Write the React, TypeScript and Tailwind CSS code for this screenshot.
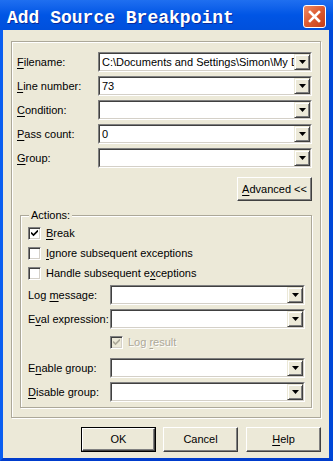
import React from 'react';

const U = ({ children }: { children: React.ReactNode }) => <span className="underline underline-offset-[2px]">{children}</span>;

const Arrow = () => (
    <svg width="7" height="4" viewBox="0 0 7 4" className="block">
        <path d="M0 0h7L3.5 4z" fill="#000" />
    </svg>
);

const Combo = ({ value = '' }: { value?: string }) => (
    <div className="flex h-[20px] flex-1 min-w-0 border border-t-[#808080] border-l-[#808080] border-b-white border-r-white">
        <div className="flex flex-1 min-w-0 border border-t-[#404040] border-l-[#404040] border-b-[#d4d0c8] border-r-[#d4d0c8] bg-white">
            <div className="flex-1 min-w-0 overflow-hidden whitespace-nowrap pl-[2px] leading-[16px]">{value}</div>
            <div className="flex w-[16px] items-center justify-center border border-t-[#ece9d8] border-l-[#ece9d8] border-b-[#404040] border-r-[#404040] bg-[#ece9d8] shadow-[inset_1px_1px_0_white,inset_-1px_-1px_0_#808080]">
                <Arrow />
            </div>
        </div>
    </div>
);

const Check = ({ checked = false, disabled = false }: { checked?: boolean; disabled?: boolean }) => (
    <div className={`flex h-[13px] w-[13px] shrink-0 items-center justify-center border border-t-[#808080] border-l-[#808080] border-b-white border-r-white shadow-[inset_1px_1px_0_#404040,inset_-1px_-1px_0_#d4d0c8] ${disabled ? 'bg-[#ece9d8]' : 'bg-white'}`}>
        {checked && (
            <svg width="7" height="7" viewBox="0 0 7 7" className="block">
                <path d="M0 2.5l2.5 2.5L7 0.5" fill="none" stroke={disabled ? '#aca899' : '#000'} strokeWidth="1.6" />
            </svg>
        )}
    </div>
);

const Button = ({ children, isDefault = false, className = '' }: { children: React.ReactNode; isDefault?: boolean; className?: string }) => (
    <div className={`${isDefault ? 'border border-black' : ''} ${className}`}>
        <div className="flex h-full w-full items-center justify-center border border-t-white border-l-white border-b-[#404040] border-r-[#404040] bg-[#ece9d8] shadow-[inset_-1px_-1px_0_#808080]">
            {children}
        </div>
    </div>
);

const topFields: { label: React.ReactNode; value?: string }[] = [
    { label: <><U>F</U>ilename:</>, value: 'C:\\Documents and Settings\\Simon\\My D' },
    { label: <><U>L</U>ine number:</>, value: '73' },
    { label: <><U>C</U>ondition:</> },
    { label: <><U>P</U>ass count:</>, value: '0' },
    { label: <><U>G</U>roup:</> },
];

export default function App() {
    return (
        <div className="flex h-[461px] w-[333px] flex-col bg-[#0055e5] text-[11px] text-black [font-family:'Liberation_Sans',Arial,sans-serif]">
            {/* title bar */}
            <div className="flex h-[30px] shrink-0 items-start justify-between bg-gradient-to-b from-[#1f6ff0] via-[#0055e5] to-[#0050dc]">
                <div className="pl-[7px] pt-[9px] text-[18px] font-bold leading-[18px] text-white [font-family:'Liberation_Mono',monospace] [text-shadow:1px_1px_0_#0b2a9a]">
                    Add Source Breakpoint
                </div>
                <div className="mr-[7px] mt-[5px] flex h-[23px] w-[23px] items-center justify-center rounded-[3px] border border-white bg-gradient-to-br from-[#ee8a64] via-[#dc5a30] to-[#c43c16]">
                    <svg width="13" height="13" viewBox="0 0 13 13">
                        <path d="M2 2l9 9M11 2l-9 9" stroke="#fff" strokeWidth="2.6" strokeLinecap="square" />
                    </svg>
                </div>
            </div>

            {/* client area */}
            <div className="flex flex-1 flex-col border-b-[3px] border-l-[3px] border-r-4 border-l-[#0a5ef0] border-r-[#0047d8] border-b-[#003ccc] bg-[#ece9d8] whitespace-nowrap">
                <div className="mx-[8px] mt-[11px] flex h-[377px] flex-col border border-[#aca899] pl-[5px] pr-[8px] pt-[10px] shadow-[inset_1px_1px_0_white,1px_1px_0_white]">
                    <div className="flex flex-col gap-[4px]">
                        {topFields.map((f, i) => (
                            <div key={i} className="flex items-center">
                                <div className="w-[81px] shrink-0">{f.label}</div>
                                <Combo value={f.value} />
                            </div>
                        ))}
                    </div>

                    <div className="mt-[9px] flex justify-end">
                        <Button className="h-[24px] w-[75px]">
                            <span><U>A</U>dvanced &lt;&lt;</span>
                        </Button>
                    </div>

                    <div className="relative ml-[3px] mt-[14px] flex flex-col border border-[#aca899] pb-[5px] pl-[7px] pr-[6px] pt-[7px] shadow-[inset_1px_1px_0_white,1px_1px_0_white]">
                        <span className="absolute left-[8px] top-[-8px] bg-[#ece9d8] px-[2px] leading-[14px]">Actions:</span>

                        <div className="flex h-[20px] items-center gap-[5px]">
                            <Check checked />
                            <span><U>B</U>reak</span>
                        </div>
                        <div className="flex h-[20px] items-center gap-[5px]">
                            <Check />
                            <span><U>I</U>gnore subsequent exceptions</span>
                        </div>
                        <div className="flex h-[20px] items-center gap-[5px]">
                            <Check />
                            <span>Handle subsequent e<U>x</U>ceptions</span>
                        </div>

                        <div className="mt-[2px] flex items-center">
                            <div className="w-[82px] shrink-0">Log <U>m</U>essage:</div>
                            <Combo />
                        </div>
                        <div className="mt-[4px] flex items-center">
                            <div className="w-[82px] shrink-0">E<U>v</U>al expression:</div>
                            <Combo />
                        </div>
                        <div className="mt-[3px] flex h-[20px] items-center gap-[5px] pl-[82px]">
                            <Check checked disabled />
                            <span className="text-[#aca899] [text-shadow:1px_1px_0_white]">Log <U>r</U>esult</span>
                        </div>
                        <div className="mt-[6px] flex items-center">
                            <div className="w-[82px] shrink-0">E<U>n</U>able group:</div>
                            <Combo />
                        </div>
                        <div className="mt-[4px] flex items-center">
                            <div className="w-[82px] shrink-0"><U>D</U>isable group:</div>
                            <Combo />
                        </div>
                    </div>
                </div>

                <div className="mr-[8px] mt-[9px] flex justify-end gap-[7px]">
                    <Button isDefault className="h-[25px] w-[75px]">OK</Button>
                    <Button className="h-[25px] w-[75px]">Cancel</Button>
                    <Button className="ml-[1px] h-[25px] w-[75px]"><span><U>H</U>elp</span></Button>
                </div>
            </div>
        </div>
    );
}
